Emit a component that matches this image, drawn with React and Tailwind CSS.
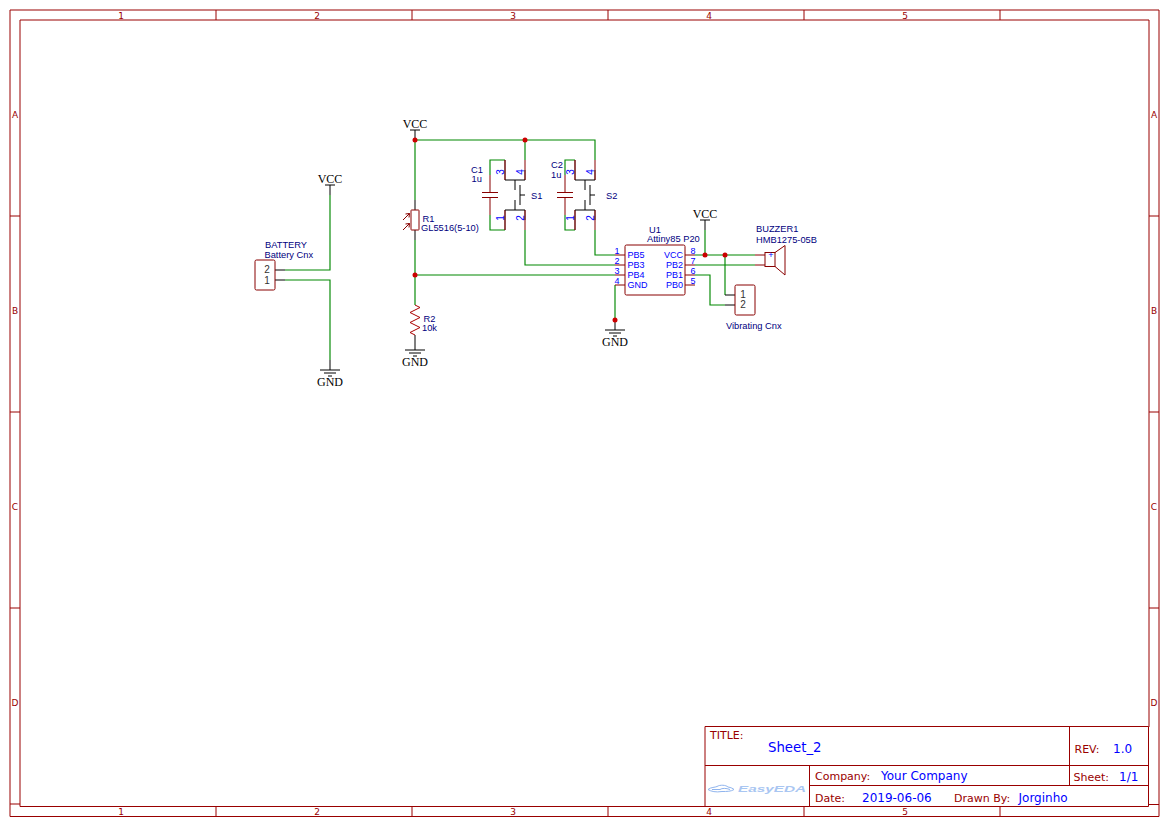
const SANS = "font-['Liberation_Sans',sans-serif]";
const DEJA = "font-['DejaVu_Sans',sans-serif]";
const SERIF = "font-['Liberation_Serif',serif]";

function Label({ x, y, children, anchor = "start" }) {
  return (
    <text x={x} y={y} textAnchor={anchor} className={`${SANS} text-[9.3px] fill-[#000080]`}>
      {children}
    </text>
  );
}
function Pin({ x, y, children, anchor = "start" }) {
  return (
    <text x={x} y={y} textAnchor={anchor} className={`${SANS} text-[9px] fill-[#0000ff]`}>
      {children}
    </text>
  );
}
function RotPin({ x, y, children }) {
  return (
    <text
      x={x}
      y={y}
      textAnchor="middle"
      transform={`rotate(-90 ${x} ${y})`}
      className={`${SANS} text-[10px] fill-[#0000ff]`}
    >
      {children}
    </text>
  );
}
function Net({ x, y, children }) {
  return (
    <text x={x} y={y} textAnchor="middle" className={`${SERIF} text-[12px] fill-black`}>
      {children}
    </text>
  );
}
function Vcc({ x, y }) {
  return (
    <g>
      <path d={`M${x} ${y}V${y + 10}M${x - 5} ${y}H${x + 5}`} className="stroke-black fill-none" />
      <Net x={x} y={y - 2.5}>VCC</Net>
    </g>
  );
}
function Gnd({ x, y, ty }) {
  return (
    <g>
      <path
        d={`M${x} ${y - 10}V${y}M${x - 10} ${y}H${x + 10}M${x - 6} ${y + 3}H${x + 6}M${x - 2} ${y + 6}H${x + 2}`}
        className="stroke-black fill-none"
      />
      <Net x={x} y={ty}>GND</Net>
    </g>
  );
}
function Dot({ x, y }) {
  return <circle cx={x} cy={y} r="2.5" className="fill-[#cc0000]" />;
}
function Switch({ l, r }) {
  const m = l + 10;
  return (
    <g>
      <path
        d={`M${r} 160V170M${r} 220V230`}
        className="stroke-[#880000] fill-none"
      />
      <path
        d={`M${l} 160V180M${r} 170V180M${l} 230V210M${r} 210V220`}
        className="stroke-[#660000] stroke-[1.4] fill-none"
      />
      <path
        d={`M${l} 180H${r}M${l} 210H${r}M${m} 180V190M${m} 200V210M${m + 5} 185V205M${m + 5} 195H${m + 10}`}
        className="stroke-black fill-none"
      />
      <RotPin x={l - 1} y={172}>3</RotPin>
      <RotPin x={r - 1} y={172}>4</RotPin>
      <RotPin x={l - 1} y={218}>1</RotPin>
      <RotPin x={r - 1} y={218}>2</RotPin>
    </g>
  );
}
function Cap({ x }) {
  return (
    <path
      d={`M${x} 175V192.5M${x} 197.5V215M${x - 8} 192.5H${x + 8}M${x - 8} 197.5H${x + 8}`}
      className="stroke-[#880000] fill-none"
    />
  );
}

export default function App() {
  const cols = [121, 317, 513, 709, 905];
  const rows = [
    ["A", 118],
    ["B", 314],
    ["C", 510],
    ["D", 706],
  ];
  const xt = [216, 412, 608, 804, 1000];
  const yt = [216, 412, 608, 804];
  const zone = `${DEJA} text-[9px] fill-[#990000]`;
  const tb = `${DEJA} text-[11px] fill-[#990000]`;
  const tv = `${DEJA} text-[12px] fill-[#0000ff]`;
  return (
    <div className="w-[1169px] h-[827px] bg-white overflow-hidden">
      <svg width="1169" height="827" viewBox="0 0 1169 827" className="block">
        {/* Frame */}
        <g className="fill-none stroke-[#990000]">
          <path d="M10 816.5V10H1159V816.5H10" />
          <path d="M20 806.5V20H1149V727" />
          {xt.map((x) => (
            <path key={x} d={`M${x} 10V20M${x} 807V816`} />
          ))}
          {yt.map((y) => (
            <path key={y} d={`M10 ${y}H20`} />
          ))}
          <path d="M1149 216H1159M1149 412H1159M1149 608H1159M1149 804.5H1159" />
        </g>
        {cols.map((x, i) => (
          <g key={x}>
            <text x={x} y={19} textAnchor="middle" className={zone}>{i + 1}</text>
            <text x={x} y={815} textAnchor="middle" className={zone}>{i + 1}</text>
          </g>
        ))}
        {rows.map(([l, y]) => (
          <g key={l}>
            <text x={15} y={y} textAnchor="middle" className={zone}>{l}</text>
            <text x={1154} y={y} textAnchor="middle" className={zone}>{l}</text>
          </g>
        ))}

        {/* Title block */}
        <g className="fill-none stroke-[#990000]">
          <path d="M705 807V726.5H1148.5V806.5H20" />
          <path d="M705 765.5H1148.5M809.5 785.5H1148.5M809.5 765.5V806.5M1069.5 726.5V785.5" />
        </g>
        <text x={710} y={739} className={tb}>TITLE:</text>
        <text x={768} y={752} className={`${DEJA} text-[13.3px] fill-[#0000ff]`}>Sheet_2</text>
        <text x={1074.5} y={753} className={tb}>REV:</text>
        <text x={1113} y={753} className={tv}>1.0</text>
        <text x={815} y={780} className={tb}>Company:</text>
        <text x={881} y={780} className={tv}>Your Company</text>
        <text x={1073.5} y={781} className={tb}>Sheet:</text>
        <text x={1119} y={781} className={tv}>1/1</text>
        <text x={815} y={802} className={tb}>Date:</text>
        <text x={862} y={802} className={tv}>2019-06-06</text>
        <text x={954} y={802} className={tb}>Drawn By:</text>
        <text x={1018.5} y={802} className={tv}>Jorginho</text>

        {/* EasyEDA logo */}
        <g className="fill-none stroke-[#8fb4ee]">
          <path d="M708 789.5C711 787 715 787.5 717 786.5C720 784.5 726 785 728 787C731 787.5 733 788.5 734 789.5C731 791.5 727 791.5 722 791.5C716 792.5 711 791.5 708 789.5Z" />
          <path d="M712 789.5H720C722 788 726 788 730 789.5" />
        </g>
        <text x={738} y={792} textLength="68" lengthAdjust="spacingAndGlyphs" className={`${SANS} text-[9px] italic font-bold fill-[#a9c6f2]`}>
          EasyEDA
        </text>

        {/* Wires */}
        <path
          className="fill-none stroke-[#008800] stroke-[1.15]"
          d="M330 195V270H285M285 280H330V360
             M415 140V200M415 240V305M415 140H595V160M525 140V160
             M505 160H490V175M490 215V230H505M575 160H565V175M565 215V230H575
             M525 230V265H615M595 230V255H615M415 275H615M615 285V320
             M705 230V255M695 255H755M695 265H755M725 255V295M695 275H710V305H725"
        />

        {/* Pins to black */}
        <path
          className="fill-none stroke-black"
          d="M285 270H275M285 280H275M415 200V210M415 230V240M415 335V340M725 295H735M725 305H735"
        />

        <Vcc x={330} y={185} />
        <Gnd x={330} y={370} ty={386} />
        <Vcc x={415} y={130} />
        <Gnd x={415} y={350} ty={366} />
        <Vcc x={705} y={220} />
        <Gnd x={615} y={330} ty={346} />

        {/* Battery connector */}
        <rect x="255" y="260" width="20" height="30" rx="1.5" className="fill-none stroke-[#880000]" />
        <text x={267} y={273} textAnchor="middle" className={`${SANS} text-[10px] fill-[#333333]`}>2</text>
        <text x={267} y={283.5} textAnchor="middle" className={`${SANS} text-[10px] fill-[#333333]`}>1</text>
        <Label x={265} y={248}>BATTERY</Label>
        <Label x={264.5} y={257.5}>Battery Cnx</Label>

        {/* R1 */}
        <g className="fill-none stroke-[#880000]">
          <rect x="411" y="210" width="8" height="20" rx="0.5" />
          <path d="M403 220L409.5 213.5M405.5 214L409.5 213.5L409 217.5M403 230L409.5 223.5M405.5 224L409.5 223.5L409 227.5" />
        </g>
        <Label x={422.5} y={222}>R1</Label>
        <Label x={421} y={231}>GL5516(5-10)</Label>

        {/* R2 */}
        <path
          d="M415 305L420 307.5L410 312.5L420 317.5L410 322.5L420 327.5L410 332.5L415 335"
          className="fill-none stroke-[#aa0000]"
        />
        <Label x={423.5} y={322}>R2</Label>
        <Label x={422} y={331}>10k</Label>

        {/* Caps and switches */}
        <Cap x={490} />
        <Cap x={565} />
        <Switch l={505} r={525} />
        <Switch l={575} r={595} />
        <Label x={471} y={173}>C1</Label>
        <Label x={471.5} y={182}>1u</Label>
        <Label x={551} y={168}>C2</Label>
        <Label x={551} y={178}>1u</Label>
        <Label x={531} y={199}>S1</Label>
        <Label x={606} y={199}>S2</Label>

        {/* U1 */}
        <g className="fill-none stroke-[#880000]">
          <rect x="625" y="245" width="60" height="50" rx="1.5" />
          <path d="M615 255H625M615 265H625M615 275H625M615 285H625M685 255H695M685 265H695M685 275H695M685 285H695" />
        </g>
        <Pin x={617} y={254} anchor="middle">1</Pin>
        <Pin x={617} y={264} anchor="middle">2</Pin>
        <Pin x={617} y={274} anchor="middle">3</Pin>
        <Pin x={617} y={284} anchor="middle">4</Pin>
        <Pin x={693} y={254} anchor="middle">8</Pin>
        <Pin x={693} y={264} anchor="middle">7</Pin>
        <Pin x={693} y={274} anchor="middle">6</Pin>
        <Pin x={693} y={284} anchor="middle">5</Pin>
        <Pin x={627.5} y={258}>PB5</Pin>
        <Pin x={627.5} y={268}>PB3</Pin>
        <Pin x={627.5} y={278}>PB4</Pin>
        <Pin x={627.5} y={288}>GND</Pin>
        <Pin x={683} y={258} anchor="end">VCC</Pin>
        <Pin x={683} y={268} anchor="end">PB2</Pin>
        <Pin x={683} y={278} anchor="end">PB1</Pin>
        <Pin x={683} y={288} anchor="end">PB0</Pin>
        <Label x={649} y={233}>U1</Label>
        <Label x={647} y={242}>Attiny85 P20</Label>

        {/* Buzzer */}
        <g className="fill-none stroke-[#880000]">
          <path d="M755 255H765M755 265H765" />
          <rect x="765" y="252.5" width="10" height="14" />
          <path d="M775 252.5L785 245.5V275L775 266.5" />
        </g>
        <Pin x={771} y={258} anchor="middle">+</Pin>
        <Label x={756} y={232}>BUZZER1</Label>
        <Label x={756} y={243}>HMB1275-05B</Label>

        {/* Vibrating connector */}
        <rect x="735" y="285" width="20" height="30" rx="1.5" className="fill-none stroke-[#880000]" />
        <text x={743} y={297.5} textAnchor="middle" className={`${SANS} text-[10px] fill-[#333333]`}>1</text>
        <text x={743} y={308} textAnchor="middle" className={`${SANS} text-[10px] fill-[#333333]`}>2</text>
        <Label x={726} y={329}>Vibrating Cnx</Label>

        <Dot x={415} y={140} />
        <Dot x={525} y={140} />
        <Dot x={415} y={275} />
        <Dot x={615} y={320} />
        <Dot x={705} y={255} />
        <Dot x={725} y={255} />
      </svg>
    </div>
  );
}
